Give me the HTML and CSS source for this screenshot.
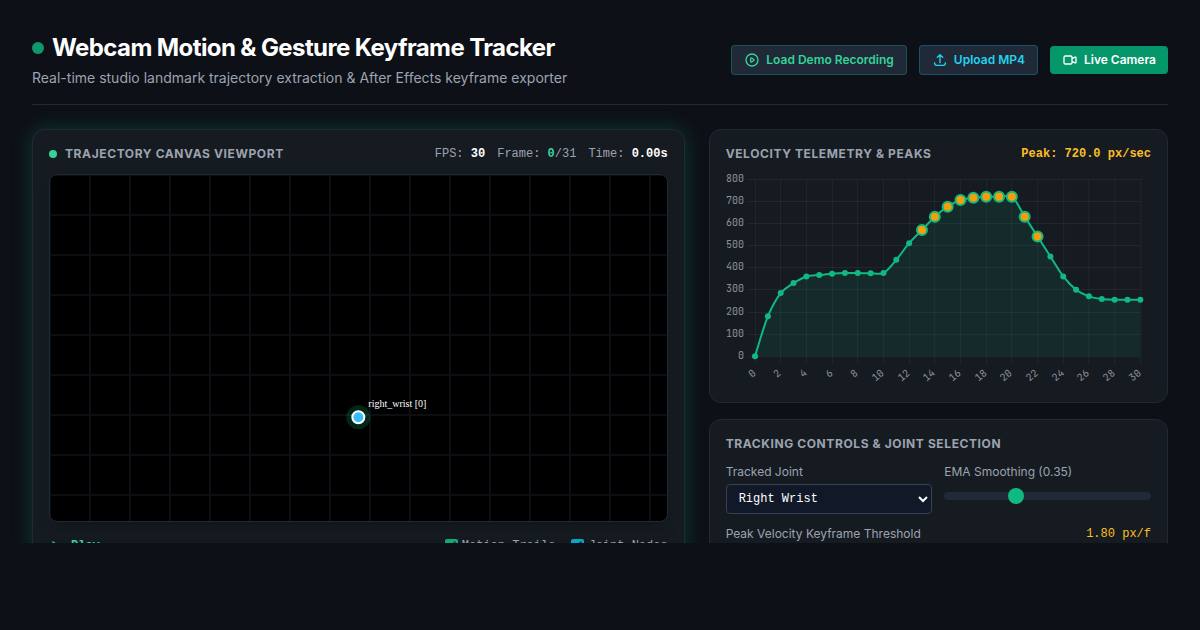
FILE: index.html
```html
<!DOCTYPE html>
<html lang="en">
<head>
<meta charset="utf-8">
<meta name="viewport" content="width=device-width, initial-scale=1">
<title>Webcam Motion &amp; Gesture Keyframe Tracker</title>
<link rel="stylesheet" href="styles.css">
</head>
<body>
<div class="app">
  <header class="header">
    <div>
      <h1 class="title"><span class="title-dot"></span>Webcam Motion &amp; Gesture Keyframe Tracker</h1>
      <p class="subtitle">Real-time studio landmark trajectory extraction &amp; After Effects keyframe exporter</p>
    </div>
    <div class="actions">
      <button class="btn btn-demo" type="button">
        <svg class="icon" viewBox="0 0 24 24" aria-hidden="true"><path d="M14.752 11.168l-3.197-2.132A1 1 0 0010 9.87v4.263a1 1 0 001.555.832l3.197-2.132a1 1 0 000-1.664z"/><path d="M21 12a9 9 0 11-18 0 9 9 0 0118 0z"/></svg>
        Load Demo Recording
      </button>
      <button class="btn btn-upload" type="button">
        <svg class="icon" viewBox="0 0 24 24" aria-hidden="true"><path d="M4 16v1a3 3 0 003 3h10a3 3 0 003-3v-1m-4-8l-4-4m0 0L8 8m4-4v12"/></svg>
        Upload MP4
      </button>
      <button class="btn btn-live" type="button">
        <svg class="icon" viewBox="0 0 24 24" aria-hidden="true"><path d="M15 10l4.553-2.276A1 1 0 0121 8.618v6.764a1 1 0 01-1.447.894L15 14M5 18h8a2 2 0 002-2V8a2 2 0 00-2-2H5a2 2 0 00-2 2v8a2 2 0 002 2z"/></svg>
        Live Camera
      </button>
    </div>
  </header>

  <main class="layout">
    <section class="card card-glow">
      <div class="card-head">
        <h2 class="card-title"><span class="live-dot"></span>Trajectory Canvas Viewport</h2>
        <div class="stats">
          <span>FPS: <b>30</b></span>
          <span>Frame: <b class="accent">0</b>/31</span>
          <span>Time: <b>0.00s</b></span>
        </div>
      </div>
      <div class="viewport">
        <svg class="viewport-scene" role="img" aria-label="Right wrist position">
          <defs>
            <pattern id="grid" width="40" height="40" patternUnits="userSpaceOnUse">
              <path class="grid-cell" d="M0 0V40M40 0V40M0 0H40M0 40H40"/>
            </pattern>
          </defs>
          <rect width="100%" height="100%" fill="url(#grid)"/>
          <circle class="node-halo" cx="50%" cy="70%" r="12"/>
          <circle class="node" cx="50%" cy="70%" r="6"/>
          <text class="node-label" x="50%" y="70%" dx="10" dy="-10">right_wrist [0]</text>
        </svg>
      </div>
      <div class="playback">
        <button class="play" type="button">
          <svg class="icon-play" viewBox="0 0 16 16" aria-hidden="true"><path d="M3.500 3v9l7-4.500z"/></svg>
          Play
        </button>
        <div class="toggles">
          <label class="toggle"><input class="check check-green" type="checkbox" checked>Motion Trails</label>
          <label class="toggle"><input class="check check-cyan" type="checkbox" checked>Joint Nodes</label>
        </div>
      </div>
    </section>

    <div class="side">
      <section class="card">
        <div class="card-head">
          <h2 class="card-title">Velocity Telemetry &amp; Peaks</h2>
          <span class="peak">Peak: 720.0 px/sec</span>
        </div>
        <svg class="chart" id="velocity-chart" viewBox="0 0 425 212" role="img" aria-label="Velocity per frame"></svg>
      </section>

      <section class="card card-fill">
        <div class="card-head">
          <h2 class="card-title">Tracking Controls &amp; Joint Selection</h2>
        </div>
        <div class="controls">
          <div class="field">
            <label class="field-label" for="joint">Tracked Joint</label>
            <select class="select" id="joint"><option>Right Wrist</option></select>
          </div>
          <div class="field">
            <label class="field-label" for="smoothing">EMA Smoothing (0.35)</label>
            <input class="range" id="smoothing" type="range" min="0.05" max="0.95" step="0.05" value="0.35">
          </div>
        </div>
        <div class="threshold">
          <span>Peak Velocity Keyframe Threshold</span>
          <span class="threshold-value">1.80 px/f</span>
        </div>
      </section>
    </div>
  </main>
</div>
<script src="chart.js"></script>
</body>
</html>
```

FILE: styles.css
```css
*, *::before, *::after { box-sizing: border-box; }

body {
  margin: 0;
  background: #0d1017;
  color: #f3f4f6;
  font-family: Inter, "Liberation Sans", sans-serif;
  font-size: 12px;
  line-height: 16px;
}

h1, h2, p { margin: 0; }
button, input, select { margin: 0; font: inherit; color: inherit; }

.app {
  height: calc(100vh - 87px);
  padding: 32px 32px 0;
  overflow: hidden;
}

.header {
  display: flex;
  align-items: center;
  justify-content: space-between;
  padding-bottom: 16px;
  margin-bottom: 24px;
  border-bottom: 1px solid #1f2937;
}

.title {
  display: flex;
  align-items: center;
  gap: 8px;
  font-size: 24px;
  line-height: 32px;
  font-weight: 700;
  letter-spacing: -0.025em;
  color: #fff;
}

.title-dot {
  width: 12px;
  height: 12px;
  border-radius: 50%;
  background: #10986b;
}

.subtitle {
  margin-top: 4px;
  font-size: 14px;
  line-height: 20px;
  color: #9ca3af;
}

.actions { display: flex; align-items: center; gap: 12px; }

.btn {
  display: flex;
  align-items: center;
  gap: 6px;
  padding: 6px 12px;
  border: 1px solid transparent;
  border-radius: 4px;
  background: #1f2937;
  font-weight: 600;
  white-space: nowrap;
}

.btn-demo { color: #34d399; border-color: rgba(16, 185, 129, 0.3); }
.btn-upload { color: #22d3ee; border-color: rgba(6, 182, 212, 0.3); }
.btn-live { color: #fff; background: #059669; border: 0; }

.icon {
  width: 16px;
  height: 16px;
  fill: none;
  stroke: currentColor;
  stroke-width: 2;
  stroke-linecap: round;
  stroke-linejoin: round;
}

.layout {
  display: grid;
  grid-template-columns: repeat(12, minmax(0, 1fr));
  gap: 24px;
}

.card {
  padding: 16px;
  border: 1px solid #1f2937;
  border-radius: 12px;
  background: #161b22;
}

.card-glow {
  grid-column: span 7;
  box-shadow: 0 0 20px rgba(16, 185, 129, 0.25);
}

.card-fill { flex: 1; }

.side {
  grid-column: span 5;
  display: flex;
  flex-direction: column;
  gap: 16px;
}

.card-head {
  display: flex;
  align-items: center;
  justify-content: space-between;
  margin-bottom: 12px;
}

.card-title {
  display: flex;
  align-items: center;
  gap: 8px;
  font-size: 12px;
  line-height: 16px;
  font-weight: 700;
  letter-spacing: 0.05em;
  text-transform: uppercase;
  color: #9ca3af;
}

.live-dot {
  width: 8px;
  height: 8px;
  border-radius: 50%;
  background: #34d399;
}

.stats, .peak, .playback, .select, .threshold-value {
  font-family: "Liberation Mono", monospace;
}

.stats { display: flex; gap: 12px; color: #9ca3af; }
.stats b { color: #fff; }
.stats .accent { color: #34d399; }

.peak { font-weight: 700; color: #fbbf24; }

.viewport {
  aspect-ratio: 16 / 9;
  border: 1px solid #1f2937;
  border-radius: 8px;
  overflow: hidden;
  background: #000;
  box-shadow: 0 10px 15px -3px rgba(0, 0, 0, 0.2);
}

.viewport-scene { display: block; width: 100%; height: 100%; }
.grid-cell { stroke: #1f2937; stroke-width: 2; opacity: 0.35; }
.node-halo { fill: #10b981; fill-opacity: 0.2; }
.node { fill: #38bdf8; stroke: #fff; stroke-width: 2; }
.node-label { fill: #fff; font: 10px "Liberation Serif", serif; }

.playback {
  display: flex;
  align-items: center;
  justify-content: space-between;
  margin-top: 16px;
  color: #9ca3af;
}

.play {
  display: flex;
  align-items: center;
  gap: 6px;
  padding: 0;
  border: 0;
  background: none;
  font-weight: 700;
  color: #34d399;
}

.icon-play { width: 16px; height: 16px; fill: currentColor; }
.toggles { display: flex; gap: 16px; }
.toggle { display: flex; align-items: center; gap: 4px; }
.check { width: 13px; height: 13px; opacity: 0.9; }
.check-green { accent-color: #10b981; }
.check-cyan { accent-color: #06b6d4; }

.chart { display: block; width: 100%; height: auto; }
.chart-grid { stroke: #fff; stroke-opacity: 0.05; }
.chart-area { fill: #10b981; fill-opacity: 0.1; }
.chart-line { fill: none; stroke: #10b981; stroke-width: 2; }
.chart-dot { fill: #10b981; }
.chart-peak { fill: #f59e0b; stroke: #10b981; stroke-width: 2; }
.chart-label {
  fill: #8e9096;
  font: 10px "JetBrains Mono", "Liberation Mono", monospace;
  text-anchor: end;
}

.controls { display: grid; grid-template-columns: 1fr 1fr; gap: 12px; }
.field { display: flex; flex-direction: column; gap: 4px; }
.field-label, .threshold { color: #9ca3af; }

.select {
  width: 100%;
  height: 30px;
  padding: 0 8px;
  border: 1px solid #374151;
  border-radius: 4px;
  background: #111827;
  color: #fff;
}

.range {
  appearance: none;
  width: 100%;
  height: 8px;
  margin-top: 8px;
  border-radius: 4px;
  background: #1f2937;
}

.range::-webkit-slider-thumb {
  appearance: none;
  width: 16px;
  height: 16px;
  border-radius: 50%;
  background: #10b981;
}

.threshold {
  display: flex;
  justify-content: space-between;
  margin-top: 12px;
}

.threshold-value { color: #fbbf24; }
```

FILE: chart.js
```js
const velocities = [
  0, 180, 285, 330, 360, 366, 372, 375, 375, 374, 375, 435, 510, 570, 630, 675,
  705, 715, 720, 720, 720, 630, 540, 450, 360, 300, 270, 258, 255, 255, 255
];
const PEAK_LEVEL = 540;
const TENSION = 0.3;
const plot = { left: 29, right: 414, top: 5, bottom: 182, max: 800 };

const svg = document.getElementById('velocity-chart');
const xAt = i => plot.left + (plot.right - plot.left) * i / (velocities.length - 1);
const yAt = v => plot.bottom - (plot.bottom - plot.top) * v / plot.max;

function add(name, attrs, text) {
  const el = document.createElementNS('http://www.w3.org/2000/svg', name);
  for (const key in attrs) el.setAttribute(key, attrs[key]);
  if (text !== undefined) el.textContent = text;
  svg.appendChild(el);
}

for (let v = 0; v <= plot.max; v += 100) {
  const y = Math.floor(yAt(v) + 0.3) + 0.5;
  add('line', { class: 'chart-grid', x1: plot.left - 8, x2: plot.right, y1: y, y2: y });
  add('text', { class: 'chart-label', x: 18, y: y + 2 }, v);
}
for (let i = 0; i < velocities.length; i += 2) {
  const x = Math.floor(xAt(i)) + 0.5;
  add('line', { class: 'chart-grid', x1: x, x2: x, y1: plot.top, y2: plot.bottom + 8 });
  add('text', { class: 'chart-label', transform: `translate(${x + 1} ${plot.bottom + 18}) rotate(-40)` }, i);
}

const points = velocities.map((v, i) => [xAt(i), yAt(v)]);
const distance = (a, b) => Math.hypot(b[0] - a[0], b[1] - a[1]);
const handles = points.map((p, i) => {
  const prev = points[Math.max(i - 1, 0)];
  const next = points[Math.min(i + 1, points.length - 1)];
  const before = distance(prev, p);
  const after = distance(p, next);
  const a = TENSION * before / (before + after);
  const b = TENSION * after / (before + after);
  const dx = next[0] - prev[0];
  const dy = next[1] - prev[1];
  return { in: [p[0] - a * dx, p[1] - a * dy], out: [p[0] + b * dx, p[1] + b * dy] };
});
let d = `M${points[0]}`;
for (let i = 1; i < points.length; i++) {
  d += `C${handles[i - 1].out} ${handles[i].in} ${points[i]}`;
}
add('path', { class: 'chart-area', d: `${d}V${plot.bottom}H${plot.left}Z` });
add('path', { class: 'chart-line', d });
points.forEach(([cx, cy], i) => {
  const peak = velocities[i] >= PEAK_LEVEL;
  add('circle', { class: peak ? 'chart-peak' : 'chart-dot', cx, cy, r: peak ? 5 : 3 });
});
```
